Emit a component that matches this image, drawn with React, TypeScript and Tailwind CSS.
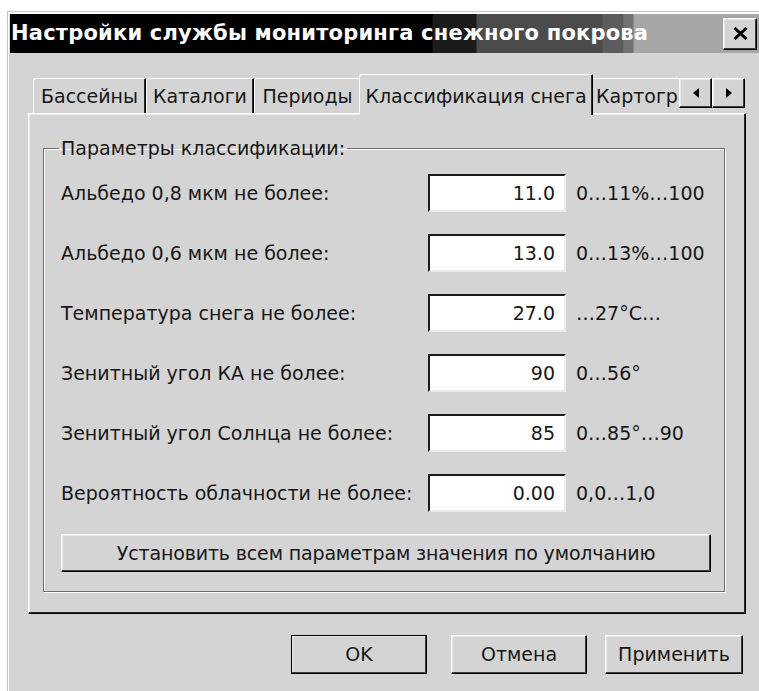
import React, { useState } from 'react';

type Param = { label: string; value: string; range: string };

const params: Param[] = [
  { label: 'Альбедо 0,8 мкм не более:', value: '11.0', range: '0…11%…100' },
  { label: 'Альбедо 0,6 мкм не более:', value: '13.0', range: '0…13%…100' },
  { label: 'Температура снега не более:', value: '27.0', range: '…27°C…' },
  { label: 'Зенитный угол КА не более:', value: '90', range: '0…56°' },
  { label: 'Зенитный угол Солнца не более:', value: '85', range: '0…85°…90' },
  { label: 'Вероятность облачности не более:', value: '0.00', range: '0,0…1,0' },
];

const tabs = [
  { id: 'basins', title: 'Бассейны', w: 'w-[113px]' },
  { id: 'dirs', title: 'Каталоги', w: 'w-[108px]' },
  { id: 'periods', title: 'Периоды', w: 'w-[107px]' },
  { id: 'snow', title: 'Классификация снега', w: 'w-[234px]' },
  { id: 'carto', title: 'Картогр', w: 'w-[110px]' },
];

// classic 3d frames
const raised =
  'border border-t-white border-l-white border-r-black border-b-black shadow-[inset_-1px_-1px_0_#3c3c3c,inset_1px_1px_0_#e9e9e9]';
const sunken =
  'border-2 border-t-[#1c1c1c] border-l-[#1c1c1c] border-r-[#ececec] border-b-[#ececec]';

const ArrowBtn = ({ dir }: { dir: 'left' | 'right' }) => (
  <button className={`w-[33px] h-[30px] flex items-center justify-center bg-[#d4d4d4] ${raised}`}>
    <svg width="6" height="10" viewBox="0 0 6 10">
      {dir === 'left' ? <polygon points="6,0 6,10 0,5" fill="#000" /> : <polygon points="0,0 0,10 6,5" fill="#000" />}
    </svg>
  </button>
);

export default function App() {
  const [active, setActive] = useState('snow');
  const [values, setValues] = useState(params.map(p => p.value));

  return (
    <div className="w-[759px] h-[691px] bg-white overflow-hidden font-['DejaVu_Sans',sans-serif] text-[#171717]">
      <div className="mt-[11px] ml-[7px] h-[680px] border-t border-l border-[#c6c6c6]">
        <div className="h-full flex flex-col border-t-2 border-l border-white bg-[#d4d4d4]">
          {/* Title bar */}
          <div className="h-[39px] ml-px flex items-center justify-between bg-[linear-gradient(90deg,#000_0px,#000_422px,#1b1b1b_423px,#1b1b1b_466px,#4b4b4b_467px,#4b4b4b_592px,#5c5c5c_593px,#5c5c5c_613px,#727272_614px,#727272_623px,#a6a6a6_624px)]">
            <span className="text-white font-bold text-[21px] tracking-[0.2px] leading-none pl-px">
              Настройки службы мониторинга снежного покрова
            </span>
            <button className={`w-[34px] h-[32px] mr-[2px] flex items-center justify-center bg-[#d4d4d4] ${raised}`}>
              <svg width="15" height="13" viewBox="0 0 15 13">
                <path d="M1.5 1 L13.5 12 M13.5 1 L1.5 12" stroke="#000" strokeWidth="3" />
              </svg>
            </button>
          </div>

          {/* Tab strip */}
          <div className="ml-[19px] w-[718px] mt-[21px] h-[39px] flex items-end pl-[5px] relative z-10">
            <div className="flex-1 min-w-0 h-full flex items-end overflow-x-clip">
              {tabs.map(t => {
                const sel = t.id === active;
                return (
                  <button
                    key={t.id}
                    onClick={() => setActive(t.id)}
                    className={`${t.w} shrink-0 flex justify-center items-center whitespace-nowrap text-[19px] leading-none bg-[#d4d4d4] rounded-tl-[3px] border-t border-l border-r border-t-white border-l-white border-r-black shadow-[inset_-1px_0_0_#2e2e2e] ${
                      sel ? 'h-[41px] -mb-[2px] -mx-[2px] pt-[4px] pb-[2px] relative z-10' : 'h-[35px]'
                    } ${t.id === 'carto' ? 'justify-start pl-[4px]' : ''}`}
                  >
                    {t.title}
                  </button>
                );
              })}
            </div>
            <div className="self-start mt-[4px] mr-px flex">
              <ArrowBtn dir="left" />
              <ArrowBtn dir="right" />
            </div>
          </div>

          {/* Tab page */}
          <div className="ml-[19px] w-[718px] h-[501px] pt-[24px] pl-[14px] pr-[20px] border border-t-white border-l-white border-r-black border-b-black shadow-[inset_-1px_-1px_0_#2a2a2a,inset_1px_1px_0_#ececec]">
            <fieldset className="border border-[#6e6e6e] shadow-[1px_1px_0_#fff,inset_1px_1px_0_#fff] pl-[17px] pr-[13px] pt-[16px] pb-[19px]">
              <legend className="-ml-[2px] px-[2px] text-[19px] leading-[20px]">Параметры классификации:</legend>
              <div className="flex flex-col gap-[22px]">
                {params.map((p, i) => (
                  <div key={p.label} className="flex items-center h-[38px]">
                    <span className="w-[367px] text-[19px] whitespace-nowrap">{p.label}</span>
                    <input
                      value={values[i]}
                      onChange={e => setValues(v => v.map((x, j) => (j === i ? e.target.value : x)))}
                      className={`w-[138px] h-[38px] bg-white text-right pr-[9px] text-[19px] outline-none ${sunken}`}
                    />
                    <span className="ml-[10px] text-[19px] whitespace-nowrap">{p.range}</span>
                  </div>
                ))}
                <button className={`h-[38px] w-full text-[19px] tracking-[-0.15px] bg-[#d4d4d4] ${raised}`}>
                  Установить всем параметрам значения по умолчанию
                </button>
              </div>
            </fieldset>
          </div>

          {/* Dialog buttons */}
          <div className="mt-[21px] flex pl-[282px]">
            <button className={`w-[136px] h-[39px] text-[19px] bg-[#d4d4d4] outline outline-1 outline-black -outline-offset-1 ${raised}`}>OK</button>
            <button className={`ml-[24px] w-[136px] h-[39px] text-[19px] bg-[#d4d4d4] ${raised}`}>Отмена</button>
            <button className={`ml-[18px] w-[138px] h-[39px] text-[19px] bg-[#d4d4d4] ${raised}`}>Применить</button>
          </div>
        </div>
      </div>
    </div>
  );
}
